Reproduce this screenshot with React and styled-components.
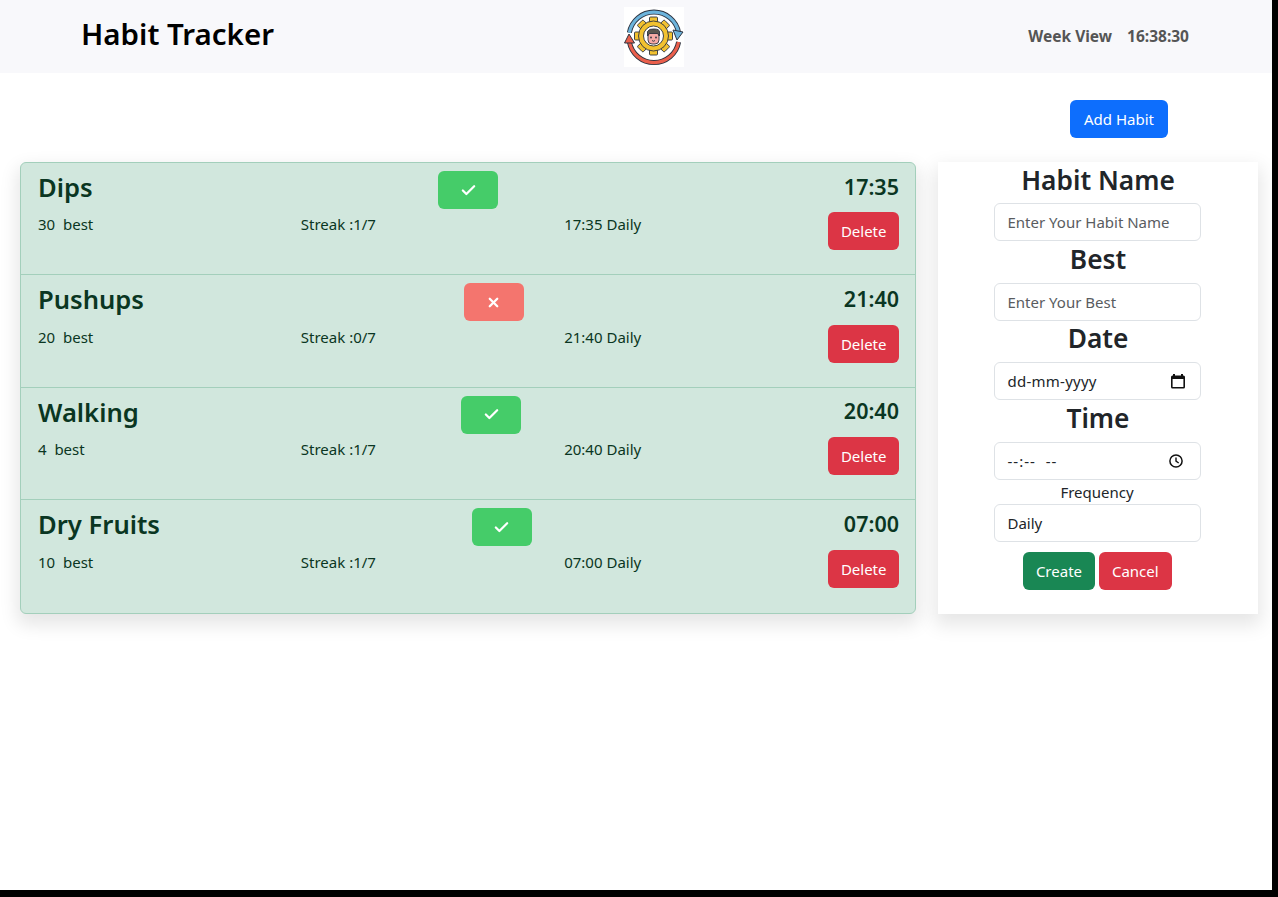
import React from "react";
import styled, { createGlobalStyle } from "styled-components";
import { Check, X } from "lucide-react";

const habits = [
  { name: "Dips", best: 30, streak: "1/7", time: "17:35", done: true },
  { name: "Pushups", best: 20, streak: "0/7", time: "21:40", done: false },
  { name: "Walking", best: 4, streak: "1/7", time: "20:40", done: true },
  { name: "Dry Fruits", best: 10, streak: "1/7", time: "07:00", done: true },
];

function Logo() {
  const teeth = [0, 45, 90, 135, 180, 225, 270, 315];
  return (
    <LogoBox>
      <svg width="60" height="60" viewBox="0 0 60 60">
        <path d="M5.400 25.600 A25 25 0 0 1 54.600 25.600" fill="none" stroke="#2d3340" strokeWidth="5" />
        <path d="M5.400 25.600 A25 25 0 0 1 54.600 25.600" fill="none" stroke="#6db4dc" strokeWidth="3.200" />
        <path d="M49 23 L59 25 L53 33 Z" fill="#6db4dc" stroke="#2d3340" strokeWidth="1" strokeLinejoin="round" />
        <path d="M54.600 35 A25 25 0 0 1 5.400 35" fill="none" stroke="#2d3340" strokeWidth="5" />
        <path d="M54.600 35 A25 25 0 0 1 5.400 35" fill="none" stroke="#ea5f4c" strokeWidth="3.200" />
        <path d="M0.500 36 L5 27 L10.500 36 Z" fill="#ea5f4c" stroke="#2d3340" strokeWidth="1" strokeLinejoin="round" />
        {teeth.map((a) => (
          <rect
            key={a}
            x="25.500"
            y="10"
            width="8"
            height="6"
            rx="1"
            fill="#f2c230"
            stroke="#2d3340"
            strokeWidth="0.900"
            transform={`rotate(${a} 29.500 29)`}
          />
        ))}
        <circle cx="29.500" cy="29" r="15" fill="#f2c230" stroke="#2d3340" strokeWidth="0.900" />
        <circle cx="29.500" cy="29" r="10" fill="#fff" stroke="#2d3340" strokeWidth="0.900" />
        <rect x="24" y="25" width="11" height="12" rx="4" fill="#f6aaa6" stroke="#2d3340" strokeWidth="0.900" />
        <path d="M23.500 29 V24.500 Q25 21.500 30 22 Q35.500 22 35.500 25 V29 L33.500 26.500 H25.500 Z" fill="#5b5750" stroke="#2d3340" strokeWidth="0.900" />
        <circle cx="27" cy="30.500" r="0.900" fill="#2d3340" />
        <circle cx="32" cy="30.500" r="0.900" fill="#2d3340" />
        <path d="M28 33.500 Q29.500 35 31 33.500" fill="none" stroke="#2d3340" strokeWidth="0.900" />
      </svg>
    </LogoBox>
  );
}

function CalendarIcon() {
  return (
    <svg width="16" height="16" viewBox="0 0 16 16">
      <path
        fill="#111"
        d="M3 1h2v1.500h6V1h2v1.500h.5A1.500 1.500 0 0 1 15 4v10a1.500 1.500 0 0 1-1.500 1.500h-11A1.500 1.500 0 0 1 1 14V4a1.500 1.500 0 0 1 1.500-1.500H3V1Zm-.4 5v7.900h10.800V6H2.600Z"
      />
    </svg>
  );
}

function ClockIcon() {
  return (
    <svg width="16" height="16" viewBox="0 0 16 16">
      <circle cx="8" cy="8" r="6.100" fill="none" stroke="#111" strokeWidth="1.500" />
      <path d="M8 4.500V8.200L10.700 10" fill="none" stroke="#111" strokeWidth="1.400" />
    </svg>
  );
}

export default function App() {
  return (
    <>
      <GlobalStyle />
      <Page>
        <Header>
          <Title>Habit Tracker</Title>
          <Logo />
          <Nav>
            <span>Week View</span>
            <span>16:38:30</span>
          </Nav>
        </Header>
        <Toolbar>
          <Button $color="#0d6efd" $pad={14}>
            Add Habit
          </Button>
        </Toolbar>
        <Main>
          <HabitList>
            {habits.map((h) => (
              <HabitRow key={h.name}>
                <RowTop>
                  <HabitName>{h.name}</HabitName>
                  <StatusButton $done={h.done}>
                    {h.done ? (
                      <Check size={17} strokeWidth={3.200} />
                    ) : (
                      <X size={15} strokeWidth={3.600} />
                    )}
                  </StatusButton>
                  <HabitTime>{h.time}</HabitTime>
                </RowTop>
                <RowBottom>
                  <span>{h.best}&nbsp; best</span>
                  <span>Streak :{h.streak}</span>
                  <span>{h.time} Daily</span>
                  <Button $color="#dc3545" $pad={12.5}>
                    Delete
                  </Button>
                </RowBottom>
              </HabitRow>
            ))}
          </HabitList>
          <FormCard>
            <FormHeading>Habit Name</FormHeading>
            <TextInput placeholder="Enter Your Habit Name" />
            <FormHeading>Best</FormHeading>
            <TextInput placeholder="Enter Your Best" />
            <FormHeading>Date</FormHeading>
            <PickerField $endPad={14}>
              <PickerValue $spacing={0.25}>dd-mm-yyyy</PickerValue>
              <CalendarIcon />
            </PickerField>
            <FormHeading>Time</FormHeading>
            <PickerField $endPad={16}>
              <PickerValue $spacing={1}>--:--&nbsp; --</PickerValue>
              <ClockIcon />
            </PickerField>
            <FrequencyLabel>Frequency</FrequencyLabel>
            <TextInput defaultValue="Daily" />
            <FormActions>
              <Button $color="#198754" $pad={12.7}>
                Create
              </Button>
              <Button $color="#dc3545" $pad={13.2}>
                Cancel
              </Button>
            </FormActions>
          </FormCard>
        </Main>
      </Page>
    </>
  );
}

const GlobalStyle = createGlobalStyle`
  html, body {
    margin: 0;
    padding: 0;
    height: 100%;
    background: #000;
  }
  body {
    font-family: "Noto Sans", "Open Sans", sans-serif;
    font-size: 16px;
    color: #212529;
    overflow: hidden;
  }
  * {
    box-sizing: border-box;
  }
`;

const Page = styled.div`
  width: 1272px;
  height: 890px;
  background: #fff;
`;

const Header = styled.header`
  height: 73px;
  display: grid;
  grid-template-columns: 543px 60px 1fr;
  align-items: center;
  padding-left: 81px;
  background: #f8f8fb;
`;

const Title = styled.div`
  margin-bottom: 6px;
  font-size: 29.5px;
  font-weight: 600;
  color: #000;
`;

const LogoBox = styled.div`
  width: 60px;
  height: 60px;
  background: #fff;

  svg {
    display: block;
  }
`;

const Nav = styled.nav`
  display: flex;
  justify-content: flex-end;
  gap: 15px;
  margin-bottom: 2px;
  padding-right: 83px;
  font-size: 15.5px;
  font-weight: 700;
  color: #555;
`;

const Toolbar = styled.div`
  height: 89px;
  display: flex;
  justify-content: flex-end;
  align-items: flex-start;
  padding: 27px 104px 0 0;
`;

const Button = styled.button`
  height: 38px;
  padding: 0 ${(p) => p.$pad || 13}px;
  border: none;
  border-radius: 6px;
  background: ${(p) => p.$color};
  color: #fff;
  font-family: inherit;
  font-size: 15px;
  line-height: 38px;
`;

const Main = styled.main`
  display: grid;
  grid-template-columns: 896px 320px;
  gap: 22px;
  margin-left: 20px;
  align-items: start;
`;

const HabitList = styled.section`
  border: 1px solid #a3cfbb;
  border-radius: 6px;
  background: #d1e7dd;
  color: #0a3622;
  box-shadow: 0 8px 18px 3px rgba(0, 0, 0, 0.1);
  overflow: hidden;
`;

const HabitRow = styled.article`
  height: 112.4px;
  padding: 8px 16px 0 17px;
  border-bottom: 1px solid #a3cfbb;

  &:last-child {
    border-bottom: none;
  }
`;

const RowTop = styled.div`
  display: flex;
  justify-content: space-between;
  align-items: center;
  height: 38px;
`;

const HabitName = styled.div`
  margin-bottom: 5px;
  font-size: 25.6px;
  font-weight: 600;
`;

const HabitTime = styled.div`
  margin-bottom: 8px;
  font-size: 21.5px;
  font-weight: 600;
`;

const StatusButton = styled.div`
  width: 60px;
  height: 38px;
  display: flex;
  align-items: center;
  justify-content: center;
  border-radius: 6px;
  background: ${(p) => (p.$done ? "#45cc69" : "#f4756e")};
  color: #fff;
`;

const RowBottom = styled.div`
  display: grid;
  grid-template-columns: 262.8px 263.4px 1fr auto;
  align-items: start;
  margin-top: 3.4px;
  font-size: 15px;
  line-height: 24px;
`;

const FormCard = styled.section`
  display: flex;
  flex-direction: column;
  align-items: center;
  height: 452px;
  padding-right: 2px;
  background: #fff;
  box-shadow: 0 8px 18px 3px rgba(0, 0, 0, 0.1);
`;

const FormHeading = styled.h3`
  margin: 1.6px 0 6.4px 2px;
  font-size: 26.3px;
  font-weight: 600;
  line-height: 33.45px;
`;

const fieldStyles = `
  width: 207px;
  height: 38px;
  flex: none;
  padding: 0 12px 0 13px;
  border: 1px solid #dee2e6;
  border-radius: 6px;
  background: #fff;
  color: #212529;
  font-family: inherit;
  font-size: 15px;
`;

const TextInput = styled.input`
  ${fieldStyles}
  outline: none;

  &::placeholder {
    color: #595c5f;
    opacity: 1;
  }
`;

const PickerField = styled.div`
  ${fieldStyles}
  display: flex;
  align-items: center;
  justify-content: space-between;
  padding-right: ${(p) => p.$endPad}px;
`;

const PickerValue = styled.span`
  letter-spacing: ${(p) => p.$spacing}px;
`;

const FrequencyLabel = styled.label`
  height: 24px;
  font-size: 15px;
  line-height: 24px;
`;

const FormActions = styled.div`
  display: flex;
  gap: 4px;
  margin: 10px 0 0 1px;
`;
